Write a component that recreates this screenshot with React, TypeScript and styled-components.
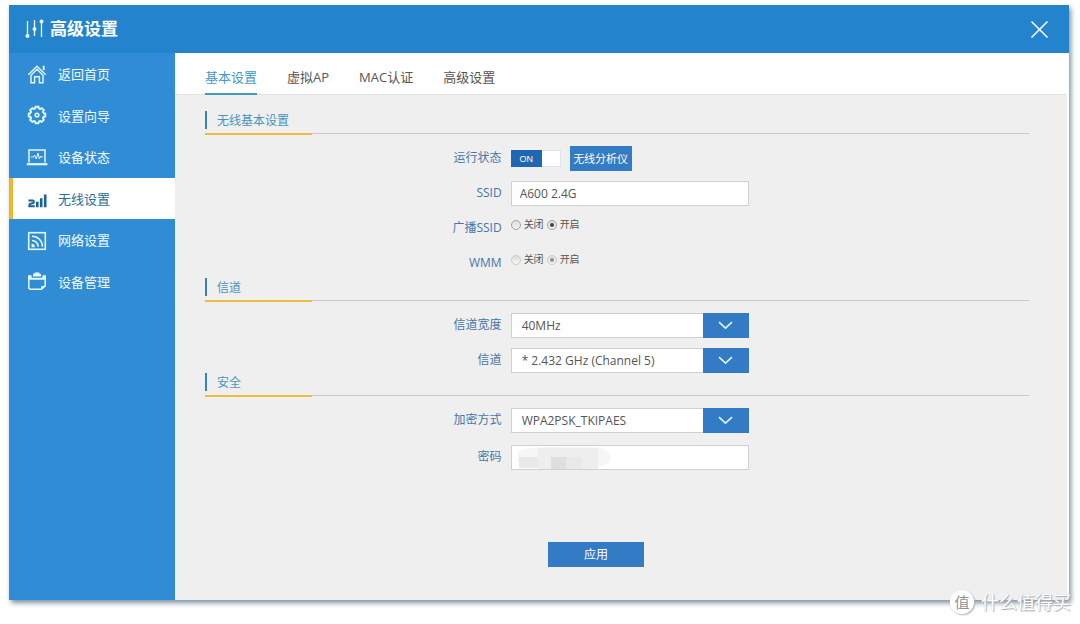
import React from 'react';
import styled, { createGlobalStyle, css } from 'styled-components';

const GlobalStyle = createGlobalStyle`
  *, *::before, *::after { box-sizing: border-box; }
  body {
    margin: 0;
    background: #fff;
    color: #555;
    font-family: 'Open Sans', 'Noto Sans CJK SC', sans-serif;
    font-size: 12px;
  }
  button, input, select { font: inherit; }
`;

const Page = styled.div`
  display: flex;
  min-height: 100vh;
  padding: 5px 11px 24px 9px;
`;

const Panel = styled.div`
  position: relative;
  flex: 1;
  display: flex;
  flex-direction: column;
  background: #fff;
  box-shadow: 2px 3px 5px #7f929f;
`;

const Header = styled.header`
  display: flex;
  align-items: center;
  height: 48px;
  padding: 0 20px 0 16px;
  background: #2383cd;
  color: #fff;
`;

const Title = styled.h1`
  flex: 1;
  margin: 0 0 0 6px;
  font-size: 17px;
  line-height: 24px;
  font-weight: 700;
`;

const CloseButton = styled.button`
  display: flex;
  padding: 0;
  border: 0;
  background: none;
  color: #fff;
  cursor: pointer;
`;

const Body = styled.div`
  flex: 1;
  display: flex;
`;

const Sidebar = styled.nav`
  flex: none;
  width: 166px;
  background: #318cd6;
`;

const NavList = styled.ul`
  display: grid;
  grid-template-rows: repeat(6, 1fr);
  height: 249px;
  margin: 0;
  padding: 0;
  list-style: none;
`;

const NavLink = styled.a<{ $active: boolean }>`
  display: flex;
  align-items: center;
  gap: 10px;
  height: 100%;
  padding-left: 13px;
  border-left: 4px solid ${p => (p.$active ? '#efb62c' : 'transparent')};
  background: ${p => (p.$active ? '#fff' : 'transparent')};
  color: ${p => (p.$active ? '#2c6f9c' : '#f2fbff')};
  font-size: 13px;
  text-decoration: none;
`;

const Main = styled.main`
  flex: 1;
  display: flex;
  flex-direction: column;
  padding-right: 2px;
`;

const TabBar = styled.nav`
  display: flex;
  gap: 30px;
  height: 42px;
  padding-left: 30px;
  border-bottom: 1px solid #e2e2e2;
`;

const Tab = styled.a<{ $active: boolean }>`
  height: 42px;
  padding-top: 8px;
  border-bottom: 2px solid ${p => (p.$active ? '#4398c8' : 'transparent')};
  color: ${p => (p.$active ? '#4398c8' : '#555')};
  font-size: 13px;
  line-height: 32px;
  text-decoration: none;
`;

const Form = styled.form`
  flex: 1;
  padding: 16px 38px 32px 30px;
  background: #efefef;
`;

const Section = styled.section`
  margin-bottom: 2px;

  & + & { margin-bottom: 0; }
`;

const SectionHead = styled.div`
  height: 23px;
  margin-bottom: 12px;
  border-bottom: 1px solid #c9c9c9;
`;

const SectionTitle = styled.h2`
  display: flex;
  align-items: flex-start;
  gap: 10px;
  width: 107px;
  height: 24px;
  margin: 0;
  border-bottom: 2px solid #edbb41;
  color: #4b93c1;
  font-size: 12px;
  line-height: 20px;
  font-weight: 400;

  &::before {
    content: '';
    width: 2px;
    height: 18px;
    background: #3a82b5;
  }
`;

const Rows = styled.div<{ $gap: number }>`
  display: grid;
  gap: ${p => p.$gap}px;
`;

const rowGrid = css`
  display: grid;
  grid-template-columns: 36% 238px;
  column-gap: 9px;
  height: 25px;
`;

const Row = styled.div`
  ${rowGrid}
`;

const Label = styled.label`
  color: #4676aa;
  line-height: 24px;
  text-align: right;
`;

const Inline = styled.div`
  display: flex;
  align-items: center;
  gap: 9px;
`;

const Toggle = styled.input`
  appearance: none;
  display: flex;
  width: 50px;
  height: 17px;
  margin: 0;
  border: 1px solid #dde4ea;
  background: #fff;
  cursor: pointer;

  &:checked::before {
    content: 'ON';
    width: 31px;
    height: 17px;
    margin: -1px;
    background: #1f67b1;
    color: #fff;
    font-family: 'Liberation Sans', sans-serif;
    font-size: 9px;
    line-height: 18px;
    text-align: center;
  }
`;

const Button = styled.button<{ $width: number; $small?: boolean }>`
  width: ${p => p.$width}px;
  height: 25px;
  padding: 0;
  border: 0;
  background: #337bc4;
  color: #fff;
  font-size: ${p => (p.$small ? 11 : 12)}px;
  line-height: 25px;
  cursor: pointer;
`;

const Field = styled.div`
  position: relative;
  display: flex;
`;

const TextInput = styled.input`
  width: 100%;
  height: 25px;
  padding: 0 8px;
  border: 1px solid #d0d0d0;
  border-radius: 0;
  background: #fff;
  color: #555;
`;

const Select = styled.select`
  appearance: none;
  width: 100%;
  height: 25px;
  padding: 0 56px 0 10px;
  border: 1px solid #d0d0d0;
  border-radius: 0;
  background: #fff;
  color: #555;
`;

const SelectArrow = styled.span`
  position: absolute;
  inset: 0 0 0 auto;
  display: flex;
  align-items: center;
  justify-content: center;
  width: 46px;
  background: #337bc4;
  pointer-events: none;
`;

const Mosaic = styled.svg`
  position: absolute;
  left: 5px;
  top: 1px;
  pointer-events: none;
`;

const RadioGroup = styled.div`
  display: flex;
  gap: 3px;
  height: 17px;
`;

const RadioLabel = styled.label`
  display: flex;
  align-items: center;
  gap: 3px;
  color: #555;
  font-size: 10px;
  line-height: 17px;
`;

const Radio = styled.input`
  appearance: none;
  display: grid;
  place-items: center;
  width: 10px;
  height: 10px;
  margin: 0;
  border: 1px solid #a2a2a2;
  border-radius: 50%;
  background: linear-gradient(#dcdcdc, #f6f6f6);

  &:checked::before {
    content: '';
    width: 4px;
    height: 4px;
    border-radius: 50%;
    background: #444;
  }

  &:disabled { border-color: #cbcbcb; }
  &:disabled::before { background: #8d9397; }
`;

const Actions = styled.div`
  display: flex;
  justify-content: center;
  padding: 72px 42px 0 0;
`;

const Watermark = styled.div`
  position: absolute;
  right: -2px;
  bottom: -15px;
  display: flex;
  align-items: center;
  gap: 7px;
  color: #fff;
  font-size: 18px;
  line-height: 26px;
  text-shadow: 1px 1px 1px #a3abb1, 0 0 1px #c6ccd0;
  pointer-events: none;
`;

const Badge = styled.span`
  width: 24px;
  height: 24px;
  border-radius: 50%;
  background: #fff;
  box-shadow: 1px 1px 2px #a9b1b6;
  color: #8f9498;
  font-size: 15px;
  line-height: 24px;
  text-align: center;
  text-shadow: none;
`;

const SlidersIcon = () => (
  <svg width="19" height="20" viewBox="0 0 19 20" fill="none" stroke="#e9fbff" strokeWidth="1.3" aria-hidden="true">
    <path d="M2.5 2v15M9.5 1v16M16.5 3v15" />
    <g fill="#e9fbff" stroke="none">
      <circle cx="2.5" cy="17" r="2" />
      <path d="M9.5 7l2.2 3-2.2 3-2.2-3z" />
      <circle cx="16.5" cy="2.5" r="2" />
    </g>
  </svg>
);

const CloseIcon = () => (
  <svg width="19" height="19" viewBox="0 0 19 19" fill="none" stroke="#effcff" strokeWidth="1.7" aria-hidden="true">
    <path d="M1.5 1.5l16 16M17.5 1.5l-16 16" />
  </svg>
);

const ChevronIcon = () => (
  <svg width="15" height="9" viewBox="0 0 15 9" fill="none" stroke="#dff4ff" strokeWidth="1.6" aria-hidden="true">
    <path d="M1 1.2l6.5 6 6.5-6" />
  </svg>
);

const NavIcon = ({ children }: { children: React.ReactNode }) => (
  <svg width="22" height="22" viewBox="0 0 22 22" fill="none" stroke="#e4f8ff" strokeWidth="1.4" aria-hidden="true">
    {children}
  </svg>
);

const HomeIcon = () => (
  <NavIcon>
    <path d="M2.3 11.8L11 3.2l8.7 8.6" />
    <path d="M5 12.3l6-6 6 6v7.4h-3.6v-6H8.6v6H5z" />
    <path d="M17.7 2.7v4.5" strokeWidth="1.8" />
  </NavIcon>
);

const gearPath = (() => {
  const pts: string[] = [];
  for (let i = 0; i < 8; i++) {
    const a = (i * Math.PI) / 4;
    [[-0.27, 6.8], [-0.19, 8.4], [0.19, 8.4], [0.27, 6.8]].forEach(([d, r]) => {
      pts.push(`${(11 + r * Math.cos(a + d)).toFixed(2)} ${(11 + r * Math.sin(a + d)).toFixed(2)}`);
    });
  }
  return `M${pts.join('L')}Z`;
})();

const GearIcon = () => (
  <NavIcon>
    <path d={gearPath} strokeWidth="1.9" strokeLinejoin="round" />
    <circle cx="11" cy="11" r="1.8" strokeWidth="1.6" />
  </NavIcon>
);

const DeviceIcon = () => (
  <NavIcon>
    <path d="M3 16.5V4h16v12.5" strokeWidth="1.5" />
    <path d="M.8 18.2h20.6" strokeWidth="2.2" />
    <path d="M5 11h2.5l1.2-2 1.6 4 1.7-6 1.4 6 1.2-3 .8 1H17" strokeWidth="1" />
  </NavIcon>
);

const SignalIcon = () => (
  <NavIcon>
    <g stroke="#1d6296">
      <path d="M2.5 13.6h4.3q1 0 1 1v.6q0 1-1 1.1l-2.4.4q-1 .2-1 1.2v1.4h5.4" strokeWidth="2" />
      <path d="M11.3 14.8v5.5M15.2 11.3v9M19.2 7.6v12.7" strokeWidth="2.6" />
    </g>
  </NavIcon>
);

const FeedIcon = () => (
  <NavIcon>
    <rect x="2.7" y="3.7" width="16.6" height="16.6" strokeWidth="1.6" />
    <path d="M6 7.2a10.5 10.5 0 0 1 10.5 10.5M6 11.5a6.2 6.2 0 0 1 6.2 6.2" strokeWidth="1.6" />
    <path d="M5.5 14.8a3.4 3.4 0 0 1 3.4 3.4H5.5z" fill="#e4f8ff" stroke="none" />
  </NavIcon>
);

const ManageIcon = () => (
  <NavIcon>
    <path d="M2.8 9.2v8q0 2 2 2h10.7l3.7-3.4V9.2" strokeWidth="1.5" />
    <path d="M2 5.2h3.6v2.6h10.8V5.2H20v4.6H2z" fill="#e4f8ff" stroke="none" />
    <path d="M7 6.6V3.8h1.6V2.6h4.8v1.2H15v2.8z" fill="#e4f8ff" stroke="none" />
    <path d="M15.3 19.5v-3.4h4z" fill="#e4f8ff" stroke="none" />
  </NavIcon>
);

const navItems = [
  { text: '返回首页', Icon: HomeIcon },
  { text: '设置向导', Icon: GearIcon },
  { text: '设备状态', Icon: DeviceIcon },
  { text: '无线设置', Icon: SignalIcon, active: true },
  { text: '网络设置', Icon: FeedIcon },
  { text: '设备管理', Icon: ManageIcon },
];

const tabs = ['基本设置', '虚拟AP', 'MAC认证', '高级设置'];

const SelectRow = ({ id, label, value }: { id: string; label: string; value: string }) => (
  <Row>
    <Label htmlFor={id}>{label}</Label>
    <Field>
      <Select id={id} defaultValue={value}>
        <option>{value}</option>
      </Select>
      <SelectArrow><ChevronIcon /></SelectArrow>
    </Field>
  </Row>
);

const OnOffRow = ({ name, label, disabled }: { name: string; label: string; disabled?: boolean }) => (
  <Row role="radiogroup" aria-labelledby={`${name}-label`}>
    <Label as="span" id={`${name}-label`}>{label}</Label>
    <RadioGroup>
      <RadioLabel><Radio type="radio" name={name} disabled={disabled} />关闭</RadioLabel>
      <RadioLabel><Radio type="radio" name={name} disabled={disabled} defaultChecked />开启</RadioLabel>
    </RadioGroup>
  </Row>
);

const FormSection = ({ title, gap, children }: { title: string; gap: number; children: React.ReactNode }) => (
  <Section>
    <SectionHead><SectionTitle>{title}</SectionTitle></SectionHead>
    <Rows $gap={gap}>{children}</Rows>
  </Section>
);

export default function App() {
  return (
    <>
      <GlobalStyle />
      <Page>
        <Panel>
          <Header>
            <SlidersIcon />
            <Title>高级设置</Title>
            <CloseButton type="button" aria-label="关闭"><CloseIcon /></CloseButton>
          </Header>
          <Body>
            <Sidebar>
              <NavList>
                {navItems.map(({ text, Icon, active }) => (
                  <li key={text}>
                    <NavLink href="#" $active={!!active}><Icon />{text}</NavLink>
                  </li>
                ))}
              </NavList>
            </Sidebar>
            <Main>
              <TabBar>
                {tabs.map((t, i) => <Tab key={t} href="#" $active={i === 0}>{t}</Tab>)}
              </TabBar>
              <Form onSubmit={e => e.preventDefault()}>
                <FormSection title="无线基本设置" gap={10}>
                  <Row>
                    <Label htmlFor="status">运行状态</Label>
                    <Inline>
                      <Toggle id="status" type="checkbox" role="switch" defaultChecked />
                      <Button type="button" $width={62} $small>无线分析仪</Button>
                    </Inline>
                  </Row>
                  <Row>
                    <Label htmlFor="ssid">SSID</Label>
                    <Field><TextInput id="ssid" defaultValue="A600 2.4G" /></Field>
                  </Row>
                  <OnOffRow name="broadcast" label="广播SSID" />
                  <OnOffRow name="wmm" label="WMM" disabled />
                </FormSection>
                <FormSection title="信道" gap={10}>
                  <SelectRow id="width" label="信道宽度" value="40MHz" />
                  <SelectRow id="channel" label="信道" value="* 2.432 GHz (Channel 5)" />
                </FormSection>
                <FormSection title="安全" gap={12}>
                  <SelectRow id="cipher" label="加密方式" value="WPA2PSK_TKIPAES" />
                  <Row>
                    <Label htmlFor="password">密码</Label>
                    <Field>
                      <TextInput id="password" type="password" />
                      <Mosaic width="96" height="23" viewBox="0 0 96 23" aria-hidden="true">
                        <path d="M2 5Q20 0 50 1h32q12 4 13 11-2 8-14 9L40 23 4 20q-4-7-2-15z" fill="#f6f6f6" />
                        <path d="M22 2h60v21H22z" fill="#eeeeee" />
                        <path d="M3 11h19v11H3z" fill="#e9e9e9" />
                        <path d="M35 11h15v12H35z" fill="#dfdfdf" />
                        <path d="M50 11h16v12H50z" fill="#e9e9e9" />
                      </Mosaic>
                    </Field>
                  </Row>
                </FormSection>
                <Actions><Button type="submit" $width={96}>应用</Button></Actions>
              </Form>
            </Main>
          </Body>
          <Watermark><Badge>值</Badge>什么值得买</Watermark>
        </Panel>
      </Page>
    </>
  );
}
